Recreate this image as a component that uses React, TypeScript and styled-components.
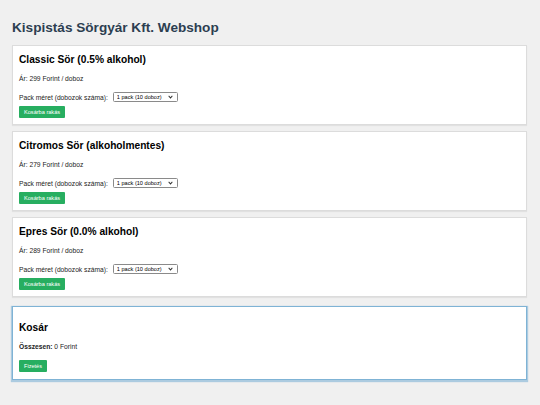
import React from 'react';
import styled, { createGlobalStyle } from 'styled-components';

const GlobalStyle = createGlobalStyle`
  html, body {
    margin: 0;
    padding: 0;
    background: #f0f0f0;
    font-family: "Liberation Sans", Arial, sans-serif;
  }
`;

const Page = styled.div`
  padding: 12px 12px;
  min-height: 405px;
  box-sizing: border-box;
`;

const Title = styled.h1`
  margin: 8px 0 9px;
  font-size: 13.6px;
  line-height: 16px;
  color: #2c3e50;
  font-weight: bold;
`;

const Card = styled.div<{ $cart?: boolean }>`
  background: #fff;
  border: 1px solid ${p => (p.$cart ? '#7fb3d5' : '#dcdcdc')};
  box-shadow: ${p => (p.$cart ? '0 1px 1px 1px rgba(127, 179, 213, 0.6)' : '0 1px 1px rgba(0, 0, 0, 0.06)')};
  padding: ${p => (p.$cart ? '14px 6px 7px' : '7px 6px 6px')};
  margin-bottom: ${p => (p.$cart ? '0' : '6px')};
  margin-top: ${p => (p.$cart ? '9px' : '0')};
  width: 515px;
  box-sizing: border-box;
`;

const ProductName = styled.h2`
  margin: 0 0 8px;
  font-size: 10.2px;
  line-height: 13px;
  font-weight: bold;
  color: #000;
`;

const Text = styled.p`
  margin: 0 0 9px;
  font-size: 6.7px;
  line-height: 9px;
  color: #222;

  b {
    font-weight: bold;
  }
`;

const Row = styled.div`
  display: flex;
  align-items: center;
  gap: 5px;
  margin-bottom: 4px;
`;

const Label = styled.label`
  font-size: 6.7px;
  line-height: 9px;
  color: #222;
`;

const arrow =
  "data:image/svg+xml,%3Csvg xmlns='http://www.w3.org/2000/svg' width='6' height='4' viewBox='0 0 6 4'%3E%3Cpath d='M0.8 0.8 L3 3 L5.2 0.8' fill='none' stroke='%23333' stroke-width='1.1'/%3E%3C/svg%3E";

const Select = styled.select`
  appearance: none;
  -webkit-appearance: none;
  width: 65px;
  height: 10px;
  box-sizing: border-box;
  font-family: "Liberation Sans", Arial, sans-serif;
  font-size: 5.6px;
  line-height: 8px;
  padding: 0 0 0 3px;
  border: 1px solid #8a8a8a;
  border-radius: 1.5px;
  background: #fff url("${arrow}") no-repeat right 4px center / 5px 3.5px;
  color: #000;
`;

const Button = styled.button`
  background: #27ae60;
  color: #fff;
  border: none;
  border-radius: 1px;
  font-family: "Liberation Sans", Arial, sans-serif;
  font-size: 5.6px;
  height: 12px;
  padding: 0 5px;
  cursor: pointer;
  display: block;
`;

const products = [
  { name: 'Classic Sör (0.5% alkohol)', price: 299 },
  { name: 'Citromos Sör (alkoholmentes)', price: 279 },
  { name: 'Epres Sör (0.0% alkohol)', price: 289 },
];

const App: React.FC = () => (
  <>
    <GlobalStyle />
    <Page>
      <Title>Kispistás Sörgyár Kft. Webshop</Title>
      {products.map(p => (
        <Card key={p.name}>
          <ProductName>{p.name}</ProductName>
          <Text>Ár: {p.price} Forint / doboz</Text>
          <Row>
            <Label>Pack méret (dobozok száma):</Label>
            <Select defaultValue="1">
              <option value="1">1 pack (10 doboz)</option>
              <option value="2">2 pack (20 doboz)</option>
              <option value="3">3 pack (30 doboz)</option>
            </Select>
          </Row>
          <Button>Kosárba rakás</Button>
        </Card>
      ))}
      <Card $cart>
        <ProductName>Kosár</ProductName>
        <Text>
          <b>Összesen:</b> 0 Forint
        </Text>
        <Button>Fizetés</Button>
      </Card>
    </Page>
  </>
);

export default App;
